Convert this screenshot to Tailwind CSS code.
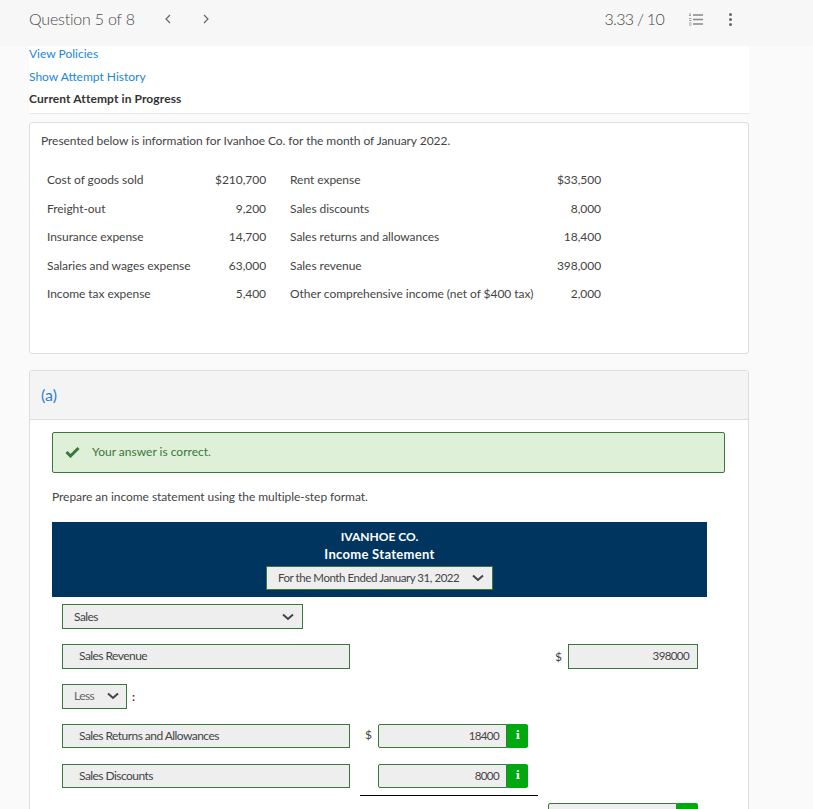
<!DOCTYPE html>
<html lang="en">
<head>
  <meta charset="UTF-8" />
  <meta name="viewport" content="width=device-width, initial-scale=1.0" />
  <title>Question 5 of 8</title>
  <script src="https://cdn.jsdelivr.net/npm/@tailwindcss/browser@4"></script>
</head>
<body class="bg-[#fafafa] h-screen overflow-hidden font-['Lato','Liberation_Sans',sans-serif] text-[12px] text-[#444]">
  <header class="h-[46px] bg-[#f7f7f7] flex items-center pb-[8px] pl-[29px] text-[#4a4a4a]">
    <span class="text-[16px] w-[106px] whitespace-nowrap font-light tracking-[-0.2px]">Question 5 of 8</span>
    <button class="ml-[29px] w-[8px]">
      <svg class="w-[8px] h-[10px]" viewBox="0 0 8 10" fill="none" stroke="#666" stroke-width="1.2"><path d="M6 1 2 5l4 4" /></svg>
    </button>
    <button class="ml-[30px] w-[8px]">
      <svg class="w-[8px] h-[10px]" viewBox="0 0 8 10" fill="none" stroke="#666" stroke-width="1.2"><path d="M2 1l4 4-4 4" /></svg>
    </button>
    <span class="ml-auto text-[16px] font-light tracking-[-0.7px] text-[#4a4a4a]">3.33 / 10</span>
    <svg class="ml-[24px] w-[15px] h-[13px]" viewBox="0 0 15 13" fill="none" stroke="#888">
      <path d="M5 2h10M5 6.5h10M5 11h10" stroke-width="1.3" />
      <path d="M1 1h2M1 2.5h2M1 5.5h2.500M1 7.500h2.500M1 10h2.500M1 12h2.500" stroke-width="0.8" />
    </svg>
    <span class="ml-[26px] mr-[81px] flex flex-col gap-[2px]">
      <i class="block w-[3px] h-[3px] rounded-full bg-[#666]"></i>
      <i class="block w-[3px] h-[3px] rounded-full bg-[#666]"></i>
      <i class="block w-[3px] h-[3px] rounded-full bg-[#666]"></i>
    </span>
  </header>

  <main class="ml-[29px] w-[720px]">
    <div class="bg-white h-[68px] border-b border-[#e8e8e8] flex flex-col">
      <a class="text-[#1a86e0] h-[15px] leading-[15px]">View Policies</a>
      <a class="text-[#1a86e0] h-[15px] mt-[8px] leading-[15px]">Show Attempt History</a>
      <span class="text-[#333] h-[15px] mt-[7px] leading-[15px] font-bold tracking-[0.1px]">Current Attempt in Progress</span>
    </div>

    <section class="mt-[8px] bg-white border border-[#ddd] rounded-[3px] h-[232px] pl-[11px] pt-[10px] text-[#444] tracking-[-0.05px]">
      <p class="leading-[15px]">Presented below is information for Ivanhoe Co. for the month of January 2022.</p>
      <table class="mt-[18px] ml-[6px]">
        <tbody>
          <tr class="h-[28.500px]"><td class="w-[168px]">Cost of goods sold</td><td class="w-[51px] text-right">$210,700</td><td class="pl-[24px] w-[289px]">Rent expense</td><td class="w-[46px] text-right">$33,500</td></tr>
          <tr class="h-[28.500px]"><td>Freight-out</td><td class="text-right">9,200</td><td class="pl-[24px]">Sales discounts</td><td class="text-right">8,000</td></tr>
          <tr class="h-[28.500px]"><td>Insurance expense</td><td class="text-right">14,700</td><td class="pl-[24px]">Sales returns and allowances</td><td class="text-right">18,400</td></tr>
          <tr class="h-[28.500px]"><td>Salaries and wages expense</td><td class="text-right">63,000</td><td class="pl-[24px]">Sales revenue</td><td class="text-right">398,000</td></tr>
          <tr class="h-[28.500px]"><td>Income tax expense</td><td class="text-right">5,400</td><td class="pl-[24px]">Other comprehensive income (net of $400 tax)</td><td class="text-right">2,000</td></tr>
        </tbody>
      </table>
    </section>

    <section class="mt-[16px] bg-white border-x border-t border-[#ddd] rounded-t-[3px] h-[500px]">
      <div class="h-[49px] bg-[#f4f4f4] border-b border-[#ddd] pl-[11px] flex items-center text-[16px] text-[#2f7fd6]">(a)</div>
      <div class="px-[22px] pt-[12px]">
        <div class="w-[673px] h-[41px] bg-[#dff0d8] border border-[#3c763d] rounded-[2px] flex items-center pl-[12px] pb-[1px] text-[#3c763d]">
          <svg class="w-[15px] h-[12px]" viewBox="0 0 15 12" fill="none" stroke="#3c763d" stroke-width="3"><path d="M1.500 6 5.500 10 13.500 2" /></svg>
          <span class="ml-[12px]">Your answer is correct.</span>
        </div>
        <p class="mt-[16px] leading-[15px] text-[#444] tracking-[-0.05px]">Prepare an income statement using the multiple-step format.</p>

        <div class="mt-[18px] w-[655px] h-[75px] bg-[#003560] flex flex-col items-center text-white">
          <div class="mt-[6px] h-[17px] leading-[18px] font-bold">IVANHOE CO.</div>
          <div class="h-[18px] leading-[18px] font-bold text-[13px] tracking-[0.3px]">Income Statement</div>
          <div class="mt-[3px] w-[227px] h-[24px] bg-[#eee] border border-[#3c763d] flex items-center pl-[11px] text-[#444]">
            <span class="whitespace-nowrap text-[11.500px] tracking-[-0.45px]">For the Month Ended January 31, 2022</span>
            <svg class="ml-auto mr-[8px] w-[12px] h-[8px]" viewBox="0 0 12 8" fill="none" stroke="#444" stroke-width="2"><path d="M1 1.500 6 6l5-4.500" /></svg>
          </div>
        </div>

        <div class="mt-[7px] pl-[10px] flex flex-col tracking-[-0.55px]">
          <div class="w-[241px] h-[25px] bg-[#eee] border border-[#3c763d] flex items-center pl-[11px]">
            <span>Sales</span>
            <svg class="ml-auto mr-[8px] w-[12px] h-[8px]" viewBox="0 0 12 8" fill="none" stroke="#444" stroke-width="2"><path d="M1 1.500 6 6l5-4.500" /></svg>
          </div>

          <div class="mt-[15px] flex h-[25px]">
            <div class="w-[288px] bg-[#eee] border border-[#3c763d] flex items-center pl-[16px] pb-[1px]">Sales Revenue</div>
            <div class="w-[198px]"></div>
            <div class="w-[20px] pl-[7px] leading-[25px]">$</div>
            <div class="w-[130px] bg-[#eee] border border-[#3c763d] flex items-center justify-end pr-[8px] pb-[1px] text-[11.500px] tracking-[-0.6px]">398000</div>
          </div>

          <div class="mt-[15px] flex h-[25px] items-center">
            <div class="w-[65px] h-[25px] bg-[#eee] border border-[#3c763d] flex items-center pl-[11px] pb-[1px]">
              <span class="text-[#666]">Less</span>
              <svg class="ml-auto mr-[7px] w-[12px] h-[8px]" viewBox="0 0 12 8" fill="none" stroke="#444" stroke-width="2"><path d="M1 1.500 6 6l5-4.500" /></svg>
            </div>
            <span class="ml-[5px] text-[#8a1f1f] font-bold">:</span>
          </div>

          <div class="mt-[15px] flex h-[24px]">
            <div class="w-[288px] bg-[#eee] border border-[#3c763d] flex items-center pl-[16px]">Sales Returns and Allowances</div>
            <div class="w-[28px] pl-[15px] leading-[22px]">$</div>
            <div class="w-[150px] flex">
              <div class="flex-1 bg-[#eee] border border-[#3c763d] rounded-l-[2px] flex items-center justify-end pr-[7px] text-[11.500px] tracking-[-0.6px]">18400</div>
              <div class="w-[21px] bg-[#00a910] rounded-r-[2px] flex items-center justify-center text-white font-['DejaVu_Serif',serif] font-bold text-[11px]">i</div>
            </div>
          </div>

          <div class="mt-[16px] flex h-[24px]">
            <div class="w-[288px] bg-[#eee] border border-[#3c763d] flex items-center pl-[16px]">Sales Discounts</div>
            <div class="w-[28px]"></div>
            <div class="w-[150px] flex">
              <div class="flex-1 bg-[#eee] border border-[#3c763d] rounded-l-[2px] flex items-center justify-end pr-[7px] text-[11.500px] tracking-[-0.6px]">8000</div>
              <div class="w-[21px] bg-[#00a910] rounded-r-[2px] flex items-center justify-center text-white font-['DejaVu_Serif',serif] font-bold text-[11px]">i</div>
            </div>
          </div>

          <div class="mt-[7px] ml-[298px] w-[178px] h-[1px] bg-black"></div>

          <div class="mt-[7px] ml-[486px] w-[150px] flex h-[24px]">
            <div class="flex-1 bg-[#eee] border border-[#3c763d] rounded-l-[2px]"></div>
            <div class="w-[21px] bg-[#00a910] rounded-r-[2px]"></div>
          </div>
        </div>
      </div>
    </section>
  </main>
</body>
</html>
